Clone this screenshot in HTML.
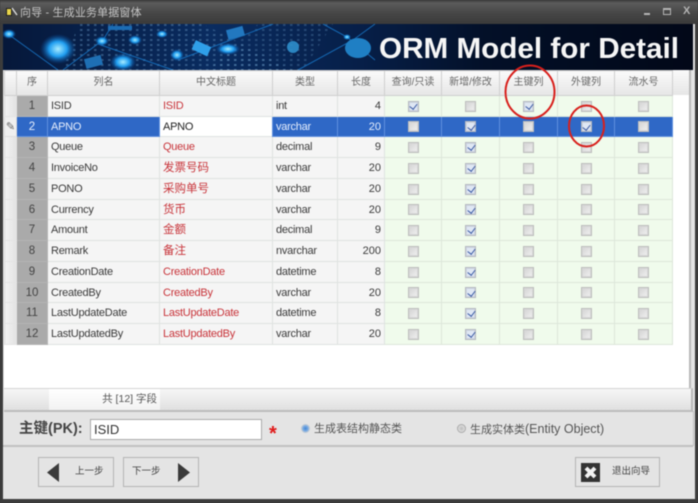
<!DOCTYPE html>
<html><head><meta charset="utf-8">
<style>
*{box-sizing:border-box}
html,body{margin:0;padding:0;width:698px;height:503px;overflow:hidden;background:#3a3a3a}
body{font-family:"Liberation Sans","Noto Sans CJK SC",sans-serif;position:relative}
#w{position:absolute;left:0;top:0;width:698px;height:503px;filter:blur(.45px)}
.a{position:absolute}
#tb{left:0;top:0;width:698px;height:24px;background:linear-gradient(#3a3a3a,#5c5c5c 3px,#484848 12px,#3a3a3a)}
#body{left:3px;top:24px;width:692px;height:475px;background:#e4e4e4}
table{position:absolute;left:4px;top:70px;border-collapse:collapse;table-layout:fixed;width:668px;font-size:11px;letter-spacing:-.25px;color:#3a3a3a}
td,th{padding:0 3px;border:1px solid #dfe3e1;overflow:hidden;white-space:nowrap;font-weight:normal;line-height:14px}
th{height:25px;background:linear-gradient(#fafafa,#e6e6e6);color:#666;text-align:center;border-color:#cfcfcf;font-size:10px;letter-spacing:0}
td{background:#f5f5f5}
td.h{background:linear-gradient(90deg,#f2f2f2,#e2e2e2);padding:0;border-color:#e4e4e4}
td.n{background:#aaa;color:#444;text-align:center;font-size:11.5px;border-color:#b4b4b4;letter-spacing:0}
td.r{color:#c8343a}
td.z{color:#c8343a;font-size:11.5px;letter-spacing:0}
td.l{text-align:right;letter-spacing:0;font-size:11px}
td.c{background:#f0fbec;text-align:center;padding:0;line-height:0;border-color:#dde6da}
i.k{display:inline-block;width:11px;height:11px;background:linear-gradient(135deg,#d2d2d2,#f2f2f2);border:1px solid #bdbdbd;box-shadow:inset 0 0 0 1px #d8d8d8;position:relative}
i.y{background:#dfe7f4;border-color:#b4b8c0;box-shadow:inset 0 0 0 1px #cfd6e2}
i.y:after{content:"";position:absolute;left:2.5px;top:.5px;width:3.5px;height:6px;border:solid #3a5aa4;border-width:0 1.6px 1.6px 0;transform:rotate(38deg)}
tr.s td{background:#2f68c6;color:#e6eefc;border-color:#5f90de}
tr.s td.h{background:#efefef;border-color:#ddd}
tr.s td.n{background:#2f68c6;color:#e6eefc}
tr.s td.e{background:#fff;color:#222;border:1px dotted #555}
tr.s td.c{background:#2f68c6}
.btn{top:457px;height:30px;border:1px solid #b4b4b4;background:#e4e4e4;font-size:9.5px;color:#444}
</style></head><body><div id="w">
<div class="a" id="tb"></div>
<div class="a" style="left:6px;top:8px;width:6px;height:8px;background:#e8d44a;border:1px solid #222"></div>
<svg class="a" style="left:11px;top:7px" width="7" height="9"><path d="M1 1 L6 8" stroke="#ddd" stroke-width="1.4"/></svg>
<div class="a" style="left:20px;top:5px;font-size:11px;letter-spacing:.15px;color:#c4c4c4;line-height:16px">向导 - 生成业务单据窗体</div>
<div class="a" style="left:644px;top:13px;width:6px;height:2px;background:#b4b4b4"></div>
<div class="a" style="left:663px;top:8px;width:8px;height:7px;border:1px solid #b4b4b4;border-top-width:2px"></div>
<div class="a" style="left:683px;top:4px;font-size:11px;font-weight:bold;color:#b4b4b4;line-height:14px">X</div>
<div class="a" style="left:0;top:24px;width:698px;height:479px;background:#3c3c3c"></div>
<div class="a" id="body"></div>

<svg class="a" style="left:3px;top:24px" width="690" height="46" viewBox="0 0 690 46">
<defs>
<linearGradient id="bg" x1="0" x2="1"><stop offset="0" stop-color="#06183a"/><stop offset=".3" stop-color="#0a2c60"/><stop offset=".52" stop-color="#071f48"/><stop offset=".7" stop-color="#031028"/><stop offset="1" stop-color="#020818"/></linearGradient>
<radialGradient id="g"><stop offset="0" stop-color="#a8ecff"/><stop offset=".5" stop-color="#1f9df0"/><stop offset="1" stop-color="#0a4fa0" stop-opacity="0"/></radialGradient>
<pattern id="d" width="7" height="5" patternUnits="userSpaceOnUse"><rect width="2.5" height="2" fill="#5a88b4" opacity=".6"/></pattern>
</defs>
<rect width="690" height="46" fill="url(#bg)"/>
<path d="M75 0 L200 0 L290 46 L60 46 Z" fill="url(#d)" opacity=".8"/>
<path d="M205 46 L255 0 L330 0 L300 46 Z" fill="url(#d)" opacity=".6"/>
<g stroke="#1774c4" stroke-width="1" fill="none" opacity=".85">
<path d="M5 10 L55 46"/><path d="M95 20 L170 46"/><path d="M175 36 L270 0"/><path d="M295 46 L350 16 L372 0"/><path d="M320 0 L344 13 L372 36"/><path d="M110 0 L100 16 L60 46"/>
</g>
<ellipse cx="55" cy="25" rx="18" ry="15" fill="url(#g)"/>
<ellipse cx="6" cy="10" rx="7" ry="5" fill="url(#g)"/>
<ellipse cx="120" cy="38" rx="13" ry="9" fill="url(#g)"/>
<ellipse cx="132" cy="16" rx="7" ry="5" fill="url(#g)"/>
<ellipse cx="99" cy="17" rx="7" ry="5" fill="url(#g)"/>
<ellipse cx="159" cy="10" rx="6" ry="4" fill="url(#g)"/>
<ellipse cx="174" cy="31" rx="7" ry="6" fill="url(#g)"/>
<ellipse cx="225" cy="25" rx="12" ry="6" fill="url(#g)"/>
<rect x="190" y="19" width="17" height="10" fill="#2f9fe8" transform="rotate(25 198 24)"/>
<rect x="82" y="33" width="17" height="10" fill="#1e6fb4" transform="rotate(-15 90 38)"/>
<rect x="224" y="4" width="17" height="10" fill="#2278c0" transform="rotate(-15 232 9)"/>
<rect x="105" y="2" width="24" height="4" fill="#1b6cb4"/>
<ellipse cx="290" cy="23" rx="6" ry="6" fill="#2f8fcc" opacity=".9"/>
<ellipse cx="355" cy="24" rx="13" ry="10" fill="#1f7fc4"/>
<ellipse cx="344" cy="13" rx="4" ry="3" fill="url(#g)"/>
<text x="376" y="34" font-family="Liberation Sans" font-weight="bold" font-size="29" fill="#f6f6f6" textLength="300" lengthAdjust="spacingAndGlyphs">ORM Model for Detail</text>
</svg>

<div class="a" style="left:4px;top:70px;width:687px;height:318px;background:#fff;border-right:2px solid #b8b8b8"></div>
<div class="a" style="left:672px;top:70px;width:17px;height:25px;background:linear-gradient(#fafafa,#e6e6e6)"></div>

<table>
<colgroup><col style="width:12px"><col style="width:31px"><col style="width:112px"><col style="width:113px"><col style="width:65px"><col style="width:47px"><col style="width:57px"><col style="width:58px"><col style="width:58px"><col style="width:57px"><col style="width:58px"></colgroup>
<tr><th style="padding:0"></th><th>序</th><th>列名</th><th>中文标题</th><th>类型</th><th>长度</th><th>查询/只读</th><th>新增/修改</th><th>主键列</th><th>外键列</th><th>流水号</th></tr>
<tr style="height:21px"><td class="h"></td><td class="n">1</td><td>ISID</td><td class="r">ISID</td><td>int</td><td class="l">4</td><td class="c"><i class="k y"></i></td><td class="c"><i class="k"></i></td><td class="c"><i class="k y"></i></td><td class="c"><i class="k"></i></td><td class="c"><i class="k"></i></td></tr>
<tr class="s" style="height:20px"><td class="h" style="font-size:11px;color:#666;text-align:center;letter-spacing:0">&#9998;</td><td class="n">2</td><td>APNO</td><td class="e">APNO</td><td>varchar</td><td class="l">20</td><td class="c"><i class="k"></i></td><td class="c"><i class="k y"></i></td><td class="c"><i class="k"></i></td><td class="c"><i class="k y"></i></td><td class="c"><i class="k"></i></td></tr>
<tr style="height:21px"><td class="h"></td><td class="n">3</td><td>Queue</td><td class="r">Queue</td><td>decimal</td><td class="l">9</td><td class="c"><i class="k"></i></td><td class="c"><i class="k y"></i></td><td class="c"><i class="k"></i></td><td class="c"><i class="k"></i></td><td class="c"><i class="k"></i></td></tr>
<tr style="height:21px"><td class="h"></td><td class="n">4</td><td>InvoiceNo</td><td class="z">发票号码</td><td>varchar</td><td class="l">20</td><td class="c"><i class="k"></i></td><td class="c"><i class="k y"></i></td><td class="c"><i class="k"></i></td><td class="c"><i class="k"></i></td><td class="c"><i class="k"></i></td></tr>
<tr style="height:21px"><td class="h"></td><td class="n">5</td><td>PONO</td><td class="z">采购单号</td><td>varchar</td><td class="l">20</td><td class="c"><i class="k"></i></td><td class="c"><i class="k y"></i></td><td class="c"><i class="k"></i></td><td class="c"><i class="k"></i></td><td class="c"><i class="k"></i></td></tr>
<tr style="height:20px"><td class="h"></td><td class="n">6</td><td>Currency</td><td class="z">货币</td><td>varchar</td><td class="l">20</td><td class="c"><i class="k"></i></td><td class="c"><i class="k y"></i></td><td class="c"><i class="k"></i></td><td class="c"><i class="k"></i></td><td class="c"><i class="k"></i></td></tr>
<tr style="height:21px"><td class="h"></td><td class="n">7</td><td>Amount</td><td class="z">金额</td><td>decimal</td><td class="l">9</td><td class="c"><i class="k"></i></td><td class="c"><i class="k y"></i></td><td class="c"><i class="k"></i></td><td class="c"><i class="k"></i></td><td class="c"><i class="k"></i></td></tr>
<tr style="height:21px"><td class="h"></td><td class="n">8</td><td>Remark</td><td class="z">备注</td><td>nvarchar</td><td class="l">200</td><td class="c"><i class="k"></i></td><td class="c"><i class="k y"></i></td><td class="c"><i class="k"></i></td><td class="c"><i class="k"></i></td><td class="c"><i class="k"></i></td></tr>
<tr style="height:21px"><td class="h"></td><td class="n">9</td><td>CreationDate</td><td class="r">CreationDate</td><td>datetime</td><td class="l">8</td><td class="c"><i class="k"></i></td><td class="c"><i class="k y"></i></td><td class="c"><i class="k"></i></td><td class="c"><i class="k"></i></td><td class="c"><i class="k"></i></td></tr>
<tr style="height:20px"><td class="h"></td><td class="n">10</td><td>CreatedBy</td><td class="r">CreatedBy</td><td>varchar</td><td class="l">20</td><td class="c"><i class="k"></i></td><td class="c"><i class="k y"></i></td><td class="c"><i class="k"></i></td><td class="c"><i class="k"></i></td><td class="c"><i class="k"></i></td></tr>
<tr style="height:21px"><td class="h"></td><td class="n">11</td><td>LastUpdateDate</td><td class="r">LastUpdateDate</td><td>datetime</td><td class="l">8</td><td class="c"><i class="k"></i></td><td class="c"><i class="k y"></i></td><td class="c"><i class="k"></i></td><td class="c"><i class="k"></i></td><td class="c"><i class="k"></i></td></tr>
<tr style="height:21px"><td class="h"></td><td class="n">12</td><td>LastUpdatedBy</td><td class="r">LastUpdatedBy</td><td>varchar</td><td class="l">20</td><td class="c"><i class="k"></i></td><td class="c"><i class="k y"></i></td><td class="c"><i class="k"></i></td><td class="c"><i class="k"></i></td><td class="c"><i class="k"></i></td></tr>
</table>

<svg class="a" style="left:0;top:0" width="698" height="160" fill="none" stroke="#d8201c" stroke-width="2">
<ellipse cx="530" cy="92" rx="24.5" ry="26.5"/>
<ellipse cx="586.5" cy="126" rx="17.5" ry="20.5"/>
</svg>

<div class="a" style="left:4px;top:388px;width:689px;height:24px;background:linear-gradient(#f6f6f6,#e0e0e0);border-top:1px solid #d4d4d4;border-bottom:2px solid #bcbcbc;border-right:2px solid #b8b8b8"></div>
<div class="a" style="left:49px;top:389px;width:111px;height:21px;background:linear-gradient(#fff,#f2f2f2);font-size:10.5px;color:#555;text-align:right;line-height:21px;padding-right:3px">共 [12] 字段</div>

<div class="a" style="left:3px;top:445px;width:690px;height:2px;background:#c0c0c0"></div>
<div class="a" style="left:693px;top:411px;width:1px;height:35px;background:#c0c0c0"></div>
<div class="a" style="left:19px;top:420px;font-size:14.5px;font-weight:bold;color:#444;line-height:18px">主键(PK):</div>
<div class="a" style="left:90px;top:419px;width:172px;height:21px;background:#fff;border:1px solid #aaa;font-size:13px;color:#333;line-height:19px;padding-left:3px">ISID</div>
<div class="a" style="left:269px;top:424px;font-size:20px;font-weight:bold;color:#e01c1c;line-height:20px">*</div>
<div class="a" style="left:301px;top:424px;width:9px;height:9px;border-radius:50%;background:radial-gradient(#3f86d8,#b8cfe8);border:1px solid #bcc8d4"></div>
<div class="a" style="left:314px;top:421px;font-size:11px;color:#555;line-height:16px">生成表结构静态类</div>
<div class="a" style="left:457px;top:424px;width:9px;height:9px;border-radius:50%;background:radial-gradient(#bbb,#eee);border:1px solid #aaa"></div>
<div class="a" style="left:470px;top:421px;font-size:11px;color:#555;line-height:16px">生成实体类<span style="font-size:12.5px">(Entity Object)</span></div>

<div class="a btn" style="left:38px;width:76px"></div>
<svg class="a" style="left:47px;top:463px" width="12" height="19"><path d="M12 0 L12 19 L0 9.5 Z" fill="#3a3a3a"/></svg>
<div class="a" style="left:75px;top:465px;font-size:9.5px;color:#444;line-height:14px">上一步</div>
<div class="a btn" style="left:123px;width:76px"></div>
<svg class="a" style="left:178px;top:463px" width="12" height="19"><path d="M0 0 L0 19 L12 9.5 Z" fill="#3a3a3a"/></svg>
<div class="a" style="left:132px;top:465px;font-size:9.5px;color:#444;line-height:14px">下一步</div>
<div class="a btn" style="left:575px;width:85px"></div>
<div class="a" style="left:581px;top:463px;width:19px;height:19px;background:#333"></div>
<svg class="a" style="left:581px;top:463px" width="19" height="19"><path d="M5 5 L14 14 M14 5 L5 14" stroke="#f2f2f2" stroke-width="4"/></svg>
<div class="a" style="left:612px;top:465px;font-size:9.5px;color:#444;line-height:14px">退出向导</div>
</div></body></html>
